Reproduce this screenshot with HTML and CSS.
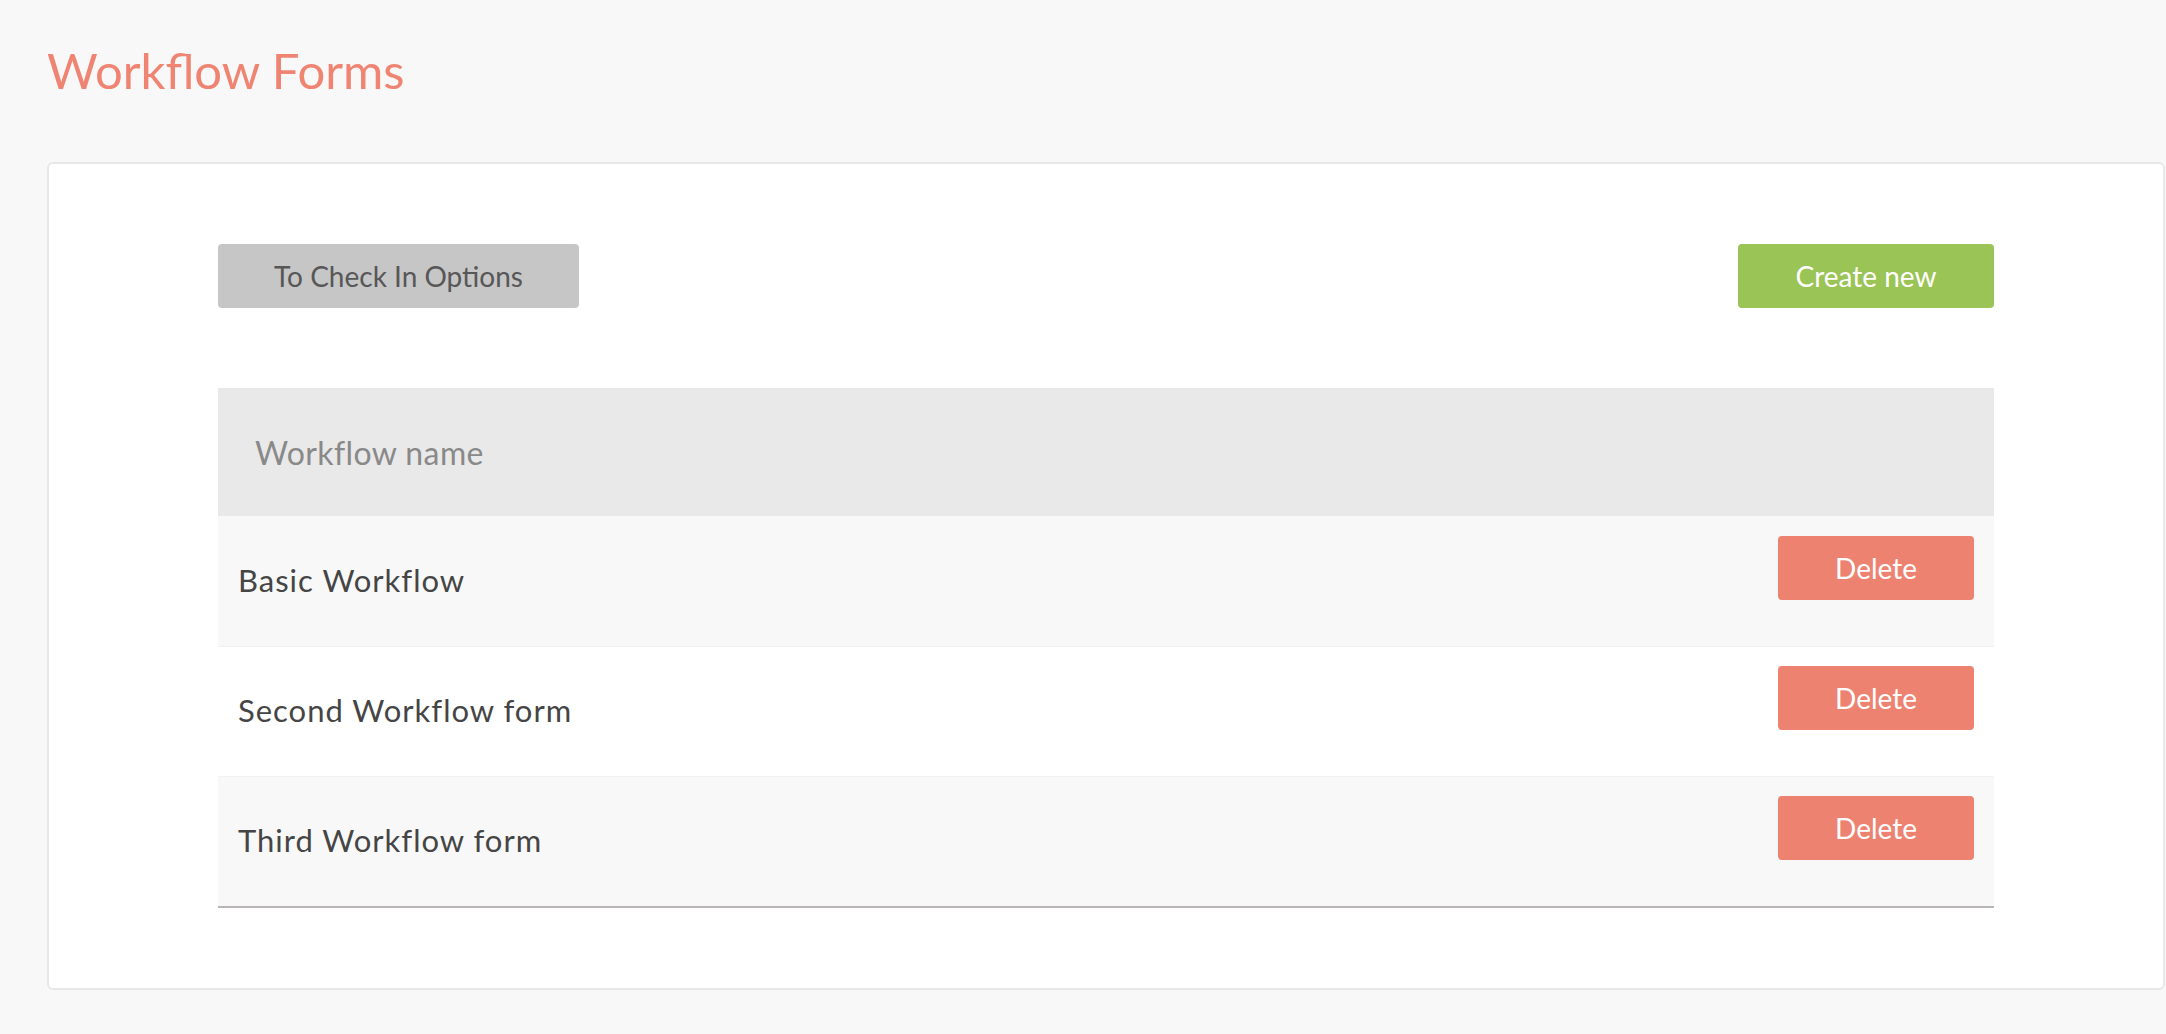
FILE: index.html
```html
<!DOCTYPE html>
<html lang="en">
<head>
<meta charset="utf-8">
<title>Workflow Forms</title>
<link rel="stylesheet" href="styles.css">
</head>
<body>
<div class="page">
  <h1 class="title">Workflow Forms</h1>
  <div class="card">
    <div class="toolbar">
      <button class="btn btn-grey">To Check In Options</button>
      <button class="btn btn-green">Create new</button>
    </div>
    <div class="table">
      <div class="table-head">Workflow name</div>
      <div class="table-row">
        <span class="row-name">Basic Workflow</span>
        <button class="btn btn-delete">Delete</button>
      </div>
      <div class="table-row">
        <span class="row-name">Second Workflow form</span>
        <button class="btn btn-delete">Delete</button>
      </div>
      <div class="table-row">
        <span class="row-name">Third Workflow form</span>
        <button class="btn btn-delete">Delete</button>
      </div>
    </div>
  </div>
</div>
</body>
</html>
```
FILE: styles.css
```css
html, body {
  margin: 0;
  padding: 0;
  background: #f8f8f8;
  font-family: "Lato", "Noto Sans", sans-serif;
}

.page {
  padding: 0 1px 44px 47px;
}

.title {
  margin: 40px 0 62px;
  font-size: 49px;
  line-height: 60px;
  font-weight: 400;
  color: #f08472;
}

.card {
  background: #ffffff;
  border: 2px solid #e8e8e8;
  border-radius: 6px;
  padding: 80px 169px;
}

.toolbar {
  display: flex;
  justify-content: space-between;
  margin-bottom: 80px;
}

.btn {
  height: 64px;
  padding: 0 56px;
  border: none;
  border-radius: 4px;
  font-family: inherit;
  font-size: 28px;
  cursor: pointer;
}

.btn-grey {
  width: 361px;
  background: #c6c6c6;
  color: #575757;
}

.btn-green {
  width: 256px;
  background: #9bc457;
  color: #ffffff;
}

.table {
  border-bottom: 2px solid #b9b4b6;
}

.table-head {
  height: 128px;
  display: flex;
  align-items: center;
  padding-left: 37px;
  background: #e9e9e9;
  color: #898989;
  font-size: 32px;
  letter-spacing: 0.4px;
}

.table-row {
  height: 130px;
  box-sizing: border-box;
  display: flex;
  justify-content: space-between;
  align-items: flex-start;
  padding: 0 20px;
  background: #ffffff;
  border-top: 1px solid #f1f1f1;
}

.table-row:nth-child(even) {
  background: #f8f8f8;
}

.table-head + .table-row {
  border-top-color: #f8f8f8;
}

.row-name {
  align-self: center;
  margin-bottom: 4px;
  font-size: 31px;
  letter-spacing: 1px;
  color: #454545;
}

.btn-delete {
  width: 196px;
  margin-top: 19px;
  background: #ee8271;
  color: #ffffff;
}
```
